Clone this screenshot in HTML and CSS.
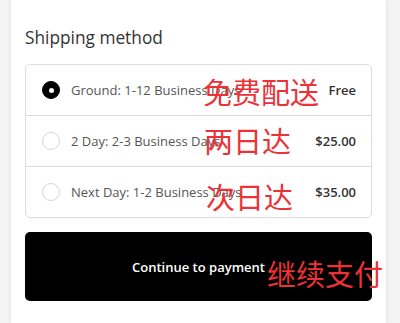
FILE: index.html
```html
<!DOCTYPE html>
<html>
<head>
<meta charset="utf-8">
<link rel="stylesheet" href="styles.css">
</head>
<body>
<div class="card">
  <h2 class="title">Shipping method</h2>
  <div class="methods">
    <div class="row">
      <span class="radio checked"></span>
      <span class="label">Ground: 1-12 Business Days</span>
      <span class="price">Free</span>
      <span class="note n1">免费配送</span>
    </div>
    <div class="row">
      <span class="radio"></span>
      <span class="label">2 Day: 2-3 Business Days</span>
      <span class="price">$25.00</span>
      <span class="note n2">两日达</span>
    </div>
    <div class="row">
      <span class="radio"></span>
      <span class="label">Next Day: 1-2 Business Days</span>
      <span class="price">$35.00</span>
      <span class="note n3">次日达</span>
    </div>
  </div>
  <div class="button">
    <span class="btn-text">Continue to payment</span>
    <span class="note n4">继续支付</span>
  </div>
</div>
</body>
</html>
```

FILE: styles.css
```css
html, body {
  margin: 0;
  padding: 0;
}
body {
  background: #f3f3f3;
  font-family: "Open Sans", "Noto Sans", sans-serif;
  height: 323px;
  overflow: hidden;
}
.card {
  margin-left: 11px;
  width: 375px;
  height: 323px;
  box-sizing: border-box;
  background: #fff;
  box-shadow: 0 0 5px rgba(0, 0, 0, 0.08);
  padding: 26px 14px 0 14px;
}
.title {
  margin: 0 0 14px 0;
  font-size: 17.3px;
  line-height: 24px;
  font-weight: 400;
  color: #333;
}
.methods {
  border: 1px solid #dcdcdc;
  border-radius: 5px;
}
.row {
  position: relative;
  height: 50px;
  display: flex;
  align-items: center;
  padding: 0 15px 0 16px;
}
.row + .row {
  border-top: 1px solid #dcdcdc;
}
.radio {
  width: 18px;
  height: 18px;
  box-sizing: border-box;
  border-radius: 50%;
  border: 1px solid #d6d6d6;
  background: #fff;
  flex: none;
  display: flex;
  align-items: center;
  justify-content: center;
}
.radio.checked {
  background: #000;
  border-color: #000;
}
.radio.checked::after {
  content: "";
  width: 5px;
  height: 5px;
  border-radius: 50%;
  background: #fff;
}
.label {
  margin-left: 11px;
  font-size: 13px;
  color: #555;
  flex: 1;
}
.price {
  font-size: 13px;
  font-weight: 600;
  color: #333;
}
.note {
  position: absolute;
  font-family: "Noto Sans CJK SC", sans-serif;
  color: #ec3237;
  font-size: 29px;
  line-height: 29px;
  white-space: nowrap;
}
.n1 { left: 177px; top: 12px; }
.n2 { left: 178px; top: 10px; }
.n3 { left: 180px; top: 15px; }
.button {
  position: relative;
  margin-top: 14px;
  height: 69px;
  background: #000;
  border-radius: 5px;
  display: flex;
  align-items: center;
  justify-content: center;
}
.btn-text {
  color: #fff;
  font-size: 13px;
  font-weight: 600;
}
.n4 {
  left: 242px;
  top: 27px;
}
```
